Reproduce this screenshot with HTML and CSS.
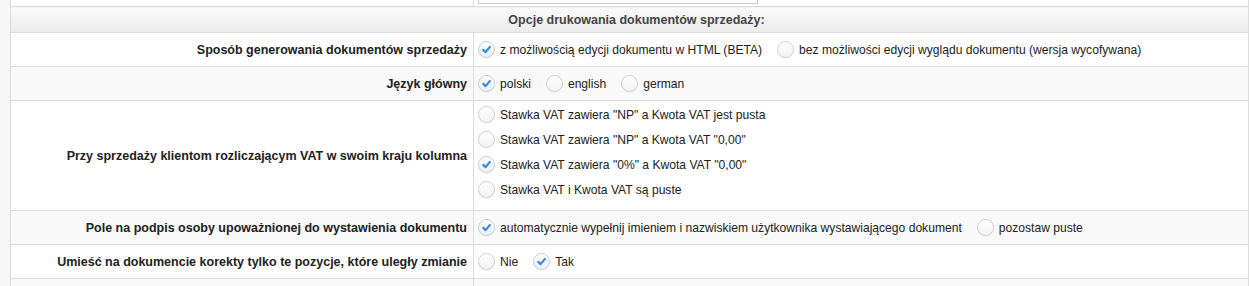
FILE: index.html
```html
<!DOCTYPE html>
<html lang="pl">
<head>
    <meta charset="UTF-8">
    <title>Ustawienia drukowania</title>
    <link rel="stylesheet" href="styles.css">
</head>
<body>
    <div class="settings-wrap">
        <table class="settings">
            <tr class="row-cut">
                <td class="label"><div class="cell"></div></td>
                <td class="value"><div class="cell"><span class="text-input"></span></div></td>
            </tr>
            <tr class="section">
                <td colspan="2">Opcje drukowania dokumentów sprzedaży:</td>
            </tr>
            <tr>
                <td class="label"><div class="cell">Sposób generowania dokumentów sprzedaży</div></td>
                <td class="value">
                    <div class="cell">
                        <label class="option"><span class="radio checked"><svg viewBox="0 0 16 16"><path d="M4.6 8.4 L7 10.8 L11.6 5.4"/></svg></span>z możliwością edycji dokumentu w HTML (BETA)</label>
                        <label class="option"><span class="radio"></span>bez możliwości edycji wyglądu dokumentu (wersja wycofywana)</label>
                    </div>
                </td>
            </tr>
            <tr class="alt">
                <td class="label"><div class="cell">Język główny</div></td>
                <td class="value">
                    <div class="cell">
                        <label class="option"><span class="radio checked"><svg viewBox="0 0 16 16"><path d="M4.6 8.4 L7 10.8 L11.6 5.4"/></svg></span>polski</label>
                        <label class="option"><span class="radio"></span>english</label>
                        <label class="option"><span class="radio"></span>german</label>
                    </div>
                </td>
            </tr>
            <tr>
                <td class="label"><div class="cell">Przy sprzedaży klientom rozliczającym VAT w swoim kraju kolumna</div></td>
                <td class="value">
                    <div class="stack">
                        <label class="option"><span class="radio"></span>Stawka VAT zawiera "NP" a Kwota VAT jest pusta</label>
                        <label class="option"><span class="radio"></span>Stawka VAT zawiera "NP" a Kwota VAT "0,00"</label>
                        <label class="option"><span class="radio checked"><svg viewBox="0 0 16 16"><path d="M4.6 8.4 L7 10.8 L11.6 5.4"/></svg></span>Stawka VAT zawiera "0%" a Kwota VAT "0,00"</label>
                        <label class="option"><span class="radio"></span>Stawka VAT i Kwota VAT są puste</label>
                    </div>
                </td>
            </tr>
            <tr class="alt">
                <td class="label"><div class="cell">Pole na podpis osoby upoważnionej do wystawienia dokumentu</div></td>
                <td class="value">
                    <div class="cell">
                        <label class="option"><span class="radio checked"><svg viewBox="0 0 16 16"><path d="M4.6 8.4 L7 10.8 L11.6 5.4"/></svg></span>automatycznie wypełnij imieniem i nazwiskiem użytkownika wystawiającego dokument</label>
                        <label class="option"><span class="radio"></span>pozostaw puste</label>
                    </div>
                </td>
            </tr>
            <tr>
                <td class="label"><div class="cell">Umieść na dokumencie korekty tylko te pozycje, które uległy zmianie</div></td>
                <td class="value">
                    <div class="cell">
                        <label class="option"><span class="radio"></span>Nie</label>
                        <label class="option"><span class="radio checked"><svg viewBox="0 0 16 16"><path d="M4.6 8.4 L7 10.8 L11.6 5.4"/></svg></span>Tak</label>
                    </div>
                </td>
            </tr>
            <tr class="alt">
                <td class="label"><div class="cell short"></div></td>
                <td class="value"><div class="cell short"></div></td>
            </tr>
        </table>
    </div>
</body>
</html>
```

FILE: styles.css
```css
body {
    margin: 0;
    padding: 0 0 0 10px;
    background: #f7f7f7;
    font-family: 'Liberation Sans', Arial, sans-serif;
    font-size: 12.5px;
    color: #222;
    overflow: hidden;
}

.settings-wrap {
    overflow: hidden;
}

.settings {
    width: 1239px;
    margin-top: -28px;
    border-collapse: collapse;
    background: #fff;
    border: 1px solid #ddd;
}

.settings td {
    padding: 0;
    border: 1px solid #ddd;
    vertical-align: middle;
}

.settings tr.alt td {
    background: #f9f9f9;
}

.settings td.label {
    width: 456px;
    padding-right: 6px;
    text-align: right;
    font-weight: bold;
    color: #222;
}

.settings td.value {
    padding-left: 4px;
}

.cell {
    height: 33px;
    display: flex;
    align-items: center;
}

.cell.short {
    height: 7px;
}

.label .cell {
    justify-content: flex-end;
}

.section td {
    height: 25px;
    text-align: center;
    font-weight: bold;
    color: #444;
    background: linear-gradient(#fafafa, #ececec);
    padding-left: 14px;
}

.text-input {
    display: block;
    width: 278px;
    height: 22px;
    margin-top: 5px;
    border: 1px solid #ccc;
    background: #fff;
}

.stack {
    display: flex;
    flex-direction: column;
    padding: 1px 0 8px;
}

.stack .option {
    height: 25px;
}

.option {
    display: inline-flex;
    align-items: center;
    margin-right: 15px;
    font-size: 12.1px;
    color: #222;
    white-space: nowrap;
}

.radio {
    width: 15px;
    height: 15px;
    margin-right: 5px;
    border: 1px solid #cfcfcf;
    border-radius: 50%;
    background: linear-gradient(#fff, #f3f3f3);
    box-shadow: inset 0 1px 1px rgba(255, 255, 255, 0.8), 0 1px 1px rgba(0, 0, 0, 0.04);
    display: inline-flex;
    flex-shrink: 0;
}

.radio.checked {
    border-color: #c4cdd8;
    background: linear-gradient(#fdfeff, #eaf1f8);
}

.radio svg {
    width: 15px;
    height: 15px;
}

.radio path {
    fill: none;
    stroke: #3b8de0;
    stroke-width: 2.4;
    stroke-linecap: round;
    stroke-linejoin: round;
}
```
